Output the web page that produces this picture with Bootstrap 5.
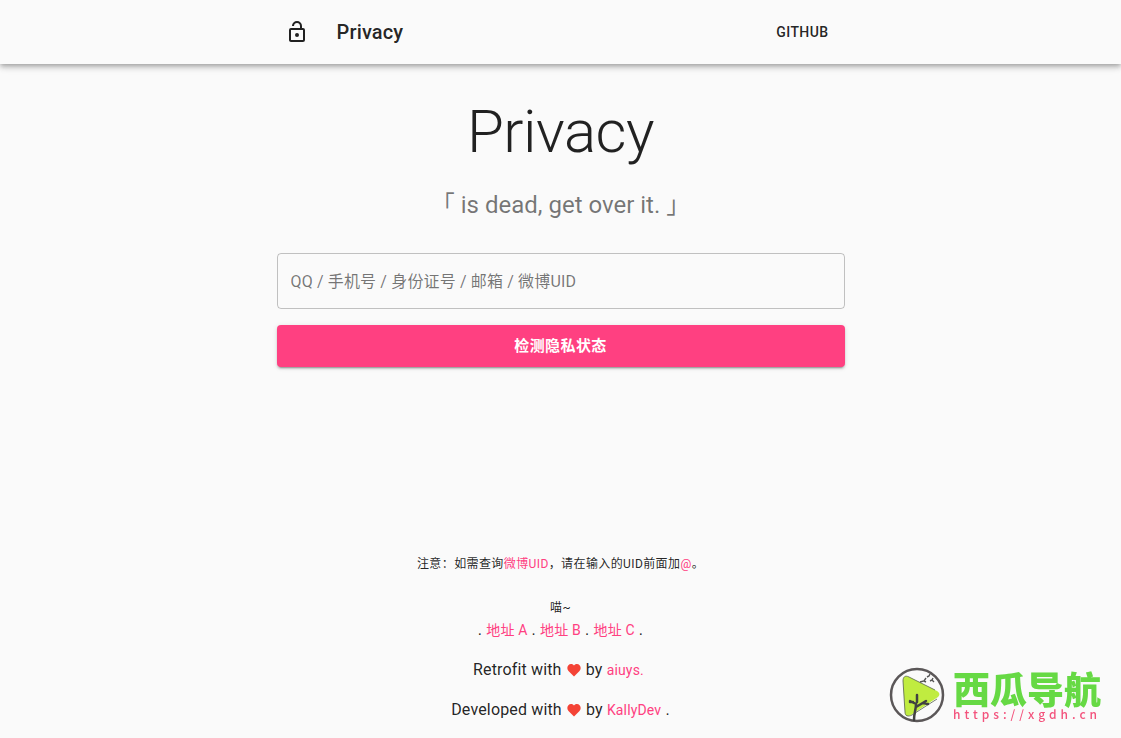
<!DOCTYPE html>
<html lang="zh-CN">
<head>
<meta charset="utf-8">
<meta name="viewport" content="width=device-width, initial-scale=1">
<title>Privacy</title>
<link href="https://cdn.jsdelivr.net/npm/bootstrap@5.3.0/dist/css/bootstrap.min.css" rel="stylesheet">
<style>
  :root { --pink: #ff4081; --ink: rgba(0, 0, 0, .87); }
  body { font: 16px/24px Roboto, "Noto Sans CJK SC", sans-serif; letter-spacing: .00938em; color: var(--ink); background: #fafafa; }
  a { color: var(--pink); text-decoration: none; }
  .page-col { max-width: 600px; padding: 0 16px; }
  .topbar { height: 64px; box-shadow: 0 2px 4px -1px rgba(0,0,0,.2), 0 4px 5px rgba(0,0,0,.14), 0 1px 10px rgba(0,0,0,.12); }
  .brand { font-size: 20px; line-height: 32px; font-weight: 500; color: var(--ink); margin-left: 28px; }
  .lock { width: 24px; height: 24px; margin-left: 8px; }
  .nav-action { font-size: 14px; font-weight: 500; color: var(--ink); letter-spacing: .02857em; padding: 6px 16px; }
  .title { font-size: 60px; line-height: 72px; font-weight: 300; letter-spacing: -.00833em; margin: 32px 0 21px; }
  .tagline { font-size: 24px; line-height: 32px; font-weight: 400; letter-spacing: 0; color: rgba(0,0,0,.54); margin-bottom: 32px; }
  .query { height: 56px; padding: 0 13px; font-size: 16px; letter-spacing: .00938em; border: 1px solid rgba(0,0,0,.23); border-radius: 4px; background: transparent; }
  .query::placeholder { color: rgba(0,0,0,.54); }
  .query:focus { background: transparent; border-color: var(--pink); box-shadow: none; }
  .submit, .submit:hover { height: 42px; margin-top: 16px; font-size: 15px; font-weight: 700; letter-spacing: .02857em; color: #fff; background: var(--pink); border: 0; border-radius: 4px; box-shadow: 0 3px 1px -2px rgba(0,0,0,.2), 0 2px 2px rgba(0,0,0,.14), 0 1px 5px rgba(0,0,0,.12); }
  .note { font-size: 12px; line-height: 20px; letter-spacing: .03333em; }
  .places a, .credit a { font-size: 14px; }
  .credit { margin-top: 16px; }
  .heart { width: 14px; height: 14px; margin: 0 1px; vertical-align: -2px; }
  .site-mark { right: 20px; bottom: 15px; gap: 8px; }
  .mark-name { font: 900 37px/38px "Noto Sans CJK SC", sans-serif; color: #66d944; letter-spacing: 0; }
  .mark-url { font: 500 12px/14px "Noto Sans CJK SC", sans-serif; color: #f3527c; letter-spacing: 4px; margin-right: -4px; }
</style>
</head>
<body class="d-flex flex-column min-vh-100">
<header class="topbar">
  <div class="page-col container-fluid h-100 d-flex align-items-center">
    <svg class="lock" viewBox="0 0 24 24" fill="currentColor" aria-hidden="true"><path d="M12 17a2 2 0 1 0 0-4 2 2 0 0 0 0 4zm6-9h-1V6a5 5 0 0 0-10 0h2c0-1.700 1.300-3 3-3s3 1.300 3 3v2H6a2 2 0 0 0-2 2v10c0 1.100.9 2 2 2h12a2 2 0 0 0 2-2V10a2 2 0 0 0-2-2zm0 12H6V10h12v10z"/></svg>
    <a class="brand" href="#">Privacy</a>
    <a class="nav-action ms-auto" href="#">GITHUB</a>
  </div>
</header>
<main class="page-col container-fluid flex-grow-1 text-center">
  <h1 class="title">Privacy</h1>
  <h2 class="tagline">「 is dead, get over it. 」</h2>
  <form>
    <input class="query form-control" type="text" aria-label="查询内容" placeholder="QQ / 手机号 / 身份证号 / 邮箱 / 微博UID">
    <button class="submit btn w-100" type="button">检测隐私状态</button>
  </form>
</main>
<footer class="page-col container-fluid text-center pb-3">
  <p class="note mb-4">注意：如需查询<a href="#">微博UID</a>，请在输入的UID前面加<a href="#">@</a>。</p>
  <div class="note">喵~</div>
  <div class="places">. <a href="#">地址 A</a> . <a href="#">地址 B</a> . <a href="#">地址 C</a> .</div>
  <div class="credit">Retrofit with <svg class="heart" viewBox="0 0 14 14" role="img" aria-label="love"><path fill="#f44336" d="M7 13.500 1.500 8C-2 4 3-1.500 7 2.500 11-1.500 16 4 12.500 8z"/></svg> by <a href="#">aiuys.</a>&nbsp;</div>
  <div class="credit">Developed with <svg class="heart" viewBox="0 0 14 14" role="img" aria-label="love"><path fill="#f44336" d="M7 13.500 1.500 8C-2 4 3-1.500 7 2.500 11-1.500 16 4 12.500 8z"/></svg> by <a href="#">KallyDev</a> .</div>
</footer>
<aside class="site-mark position-fixed d-flex align-items-center">
  <svg width="56" height="56" viewBox="0 0 56 56" aria-hidden="true">
    <circle cx="28" cy="28" r="26" fill="#fafafa" stroke="#5b5758" stroke-width="2.500"/>
    <path d="M14 14c0-4 2-6 6-4l28 14c3 2 3 4 1 6L22 48c-4 2-6 1-6-3z" fill="#c0ec40"/>
    <path d="M48 32 23 48c-4 2-7 1-7-3L14 14c0-4 2-6 6-4l26 13" fill="none" stroke="#56614b" stroke-width=".8"/>
    <path d="M25 53c0-7 2-10 2-16l-6-3m6 6 10-6m-9 1V28m-4 7-3 0m13 1 5 1" fill="none" stroke="#414141" stroke-width="2.500" stroke-linecap="round"/>
    <path d="m31 15 4-1 2-3m-2 3 2 1m1-5 2-1 1-2m0 7 2-1 1-2m-1 2 2 2" fill="none" stroke="#555" stroke-width="1.400"/>
  </svg>
  <div>
    <div class="mark-name">西瓜导航</div>
    <div class="mark-url">https://xgdh.cn</div>
  </div>
</aside>
<script src="https://cdn.jsdelivr.net/npm/bootstrap@5.3.0/dist/js/bootstrap.bundle.min.js"></script>
</body>
</html>
